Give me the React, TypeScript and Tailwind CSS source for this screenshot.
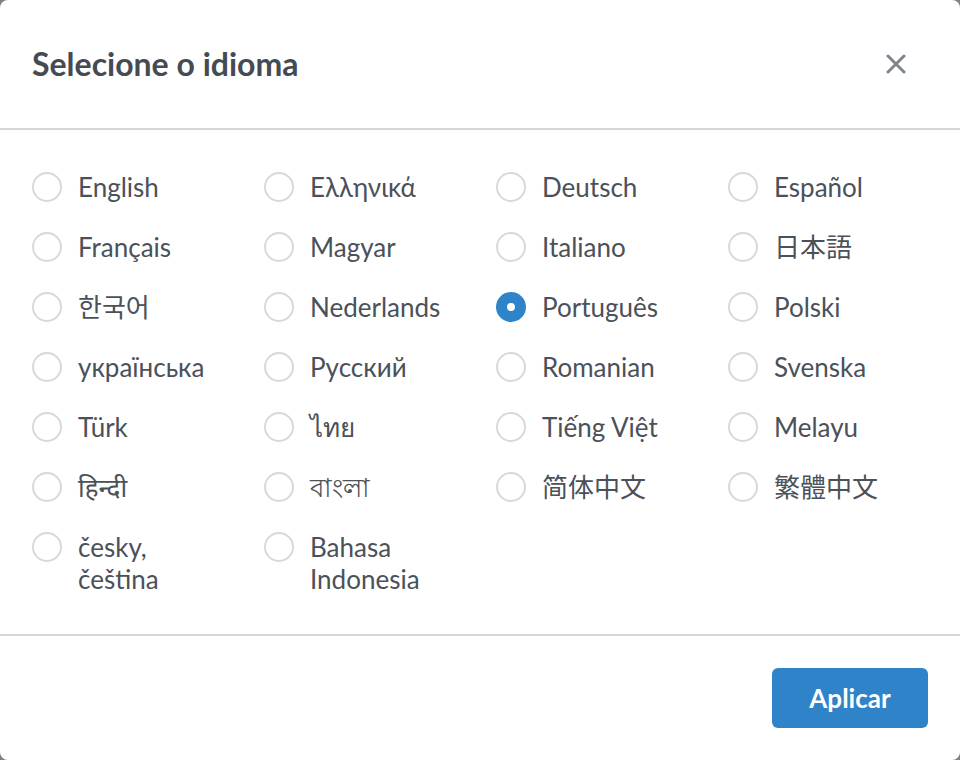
const languages = [
  "English",
  "Ελληνικά",
  "Deutsch",
  "Español",
  "Français",
  "Magyar",
  "Italiano",
  "日本語",
  "한국어",
  "Nederlands",
  "Português",
  "Polski",
  "українська",
  "Русский",
  "Romanian",
  "Svenska",
  "Türk",
  "ไทย",
  "Tiếng Việt",
  "Melayu",
  "हिन्दी",
  "বাংলা",
  "简体中文",
  "繁體中文",
  "česky, čeština",
  "Bahasa Indonesia",
];

const font = {
  fontFamily:
    'Lato, "Noto Sans", "Noto Sans CJK JP", "Noto Sans CJK KR", "Noto Sans CJK SC", "Noto Sans CJK TC", sans-serif',
};

function Radio({ checked }: { checked: boolean }) {
  if (checked) {
    return (
      <span className="mt-[1px] flex h-[30px] w-[30px] shrink-0 items-center justify-center rounded-full bg-[#2f83c8]">
        <span className="h-2 w-2 rounded-full bg-white" />
      </span>
    );
  }
  return <span className="mt-[1px] h-[30px] w-[30px] shrink-0 rounded-full border-2 border-[#d5d9de] bg-white" />;
}

export default function App() {
  const selected = "Português";

  return (
    <div className="min-h-screen w-full bg-[#808080]" style={font}>
      <div className="flex h-[760px] w-[960px] flex-col rounded-lg bg-white">
        <div className="flex h-[130px] items-center justify-between border-b-2 border-[#d3d6da] pl-8 pr-[54px]">
          <h2 className="text-[32px] font-bold text-[#454b53]">Selecione o idioma</h2>
          <button className="text-[#7d868f]" aria-label="close">
            <svg width="20" height="20" viewBox="0 0 20 20" fill="none">
              <path d="M2 2L18 18M18 2L2 18" stroke="currentColor" strokeWidth="3" strokeLinecap="round" />
            </svg>
          </button>
        </div>

        <div className="grid flex-1 grid-cols-4 content-start gap-x-8 gap-y-[28px] px-8 pt-[41px]">
          {languages.map((lang) => (
            <label key={lang} className="flex cursor-pointer items-start gap-4">
              <Radio checked={lang === selected} />
              <span className="text-[26px] leading-[32px] text-[#4b5159]">{lang}</span>
            </label>
          ))}
        </div>

        <div className="flex h-[126px] items-center justify-end border-t-2 border-[#d3d6da] px-8">
          <button className="h-[60px] w-[156px] rounded-md bg-[#2f83c8] text-[26px] font-bold text-white">
            Aplicar
          </button>
        </div>
      </div>
    </div>
  );
}
